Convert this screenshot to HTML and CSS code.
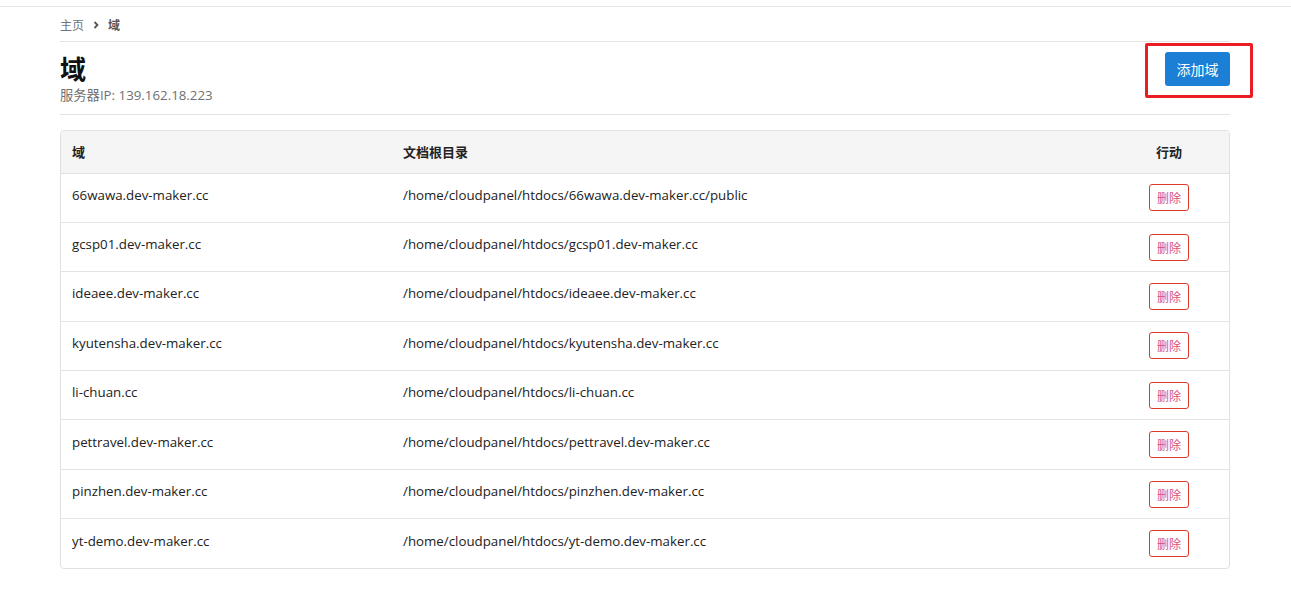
FILE: index.html
```html
<!DOCTYPE html>
<html lang="zh">
<head>
<meta charset="utf-8">
<link rel="stylesheet" href="styles.css">
</head>
<body>
<div class="topline"></div>
<main class="page">
  <nav class="crumbs">
    <a class="crumb-link">主页</a>
    <svg class="chev" width="8" height="8" viewBox="0 0 8 8"><path d="M2.5 1 L5.5 4 L2.5 7" fill="none" stroke="#555" stroke-width="1.8"/></svg>
    <span class="crumb-cur">域</span>
  </nav>
  <header class="head">
    <div class="head-text">
      <h1 class="title">域</h1>
      <div class="sub">服务器IP: 139.162.18.223</div>
    </div>
    <div class="highlight">
      <button class="btn-add">添加域</button>
    </div>
  </header>
  <div class="card">
    <table class="tbl">
      <thead>
        <tr><th class="c1">域</th><th class="c2">文档根目录</th><th class="c3">行动</th></tr>
      </thead>
      <tbody>
        <tr><td>66wawa.dev-maker.cc</td><td>/home/cloudpanel/htdocs/66wawa.dev-maker.cc/public</td><td class="act"><button class="btn-del">删除</button></td></tr>
        <tr><td>gcsp01.dev-maker.cc</td><td>/home/cloudpanel/htdocs/gcsp01.dev-maker.cc</td><td class="act"><button class="btn-del">删除</button></td></tr>
        <tr><td>ideaee.dev-maker.cc</td><td>/home/cloudpanel/htdocs/ideaee.dev-maker.cc</td><td class="act"><button class="btn-del">删除</button></td></tr>
        <tr><td>kyutensha.dev-maker.cc</td><td>/home/cloudpanel/htdocs/kyutensha.dev-maker.cc</td><td class="act"><button class="btn-del">删除</button></td></tr>
        <tr><td>li-chuan.cc</td><td>/home/cloudpanel/htdocs/li-chuan.cc</td><td class="act"><button class="btn-del">删除</button></td></tr>
        <tr><td>pettravel.dev-maker.cc</td><td>/home/cloudpanel/htdocs/pettravel.dev-maker.cc</td><td class="act"><button class="btn-del">删除</button></td></tr>
        <tr><td>pinzhen.dev-maker.cc</td><td>/home/cloudpanel/htdocs/pinzhen.dev-maker.cc</td><td class="act"><button class="btn-del">删除</button></td></tr>
        <tr><td>yt-demo.dev-maker.cc</td><td>/home/cloudpanel/htdocs/yt-demo.dev-maker.cc</td><td class="act"><button class="btn-del">删除</button></td></tr>
      </tbody>
    </table>
  </div>
</main>
</body>
</html>
```
FILE: styles.css
```css
* { box-sizing: border-box; }
html, body { margin: 0; padding: 0; background: #fff; }
body {
  font-family: "Open Sans", "Noto Sans CJK SC", sans-serif;
  font-size: 13.3px;
  color: #212529;
}
.topline { height: 7px; border-bottom: 1px solid #e6e6e6; }
.page { padding: 0 61px 0 60px; }
.crumbs {
  display: flex; align-items: center; gap: 8px;
  height: 35px; padding-top: 1px;
  border-bottom: 1px solid #e3e3e3;
  font-size: 12px;
}
.crumb-link { color: #6c757d; }
.crumb-cur { color: #555; font-weight: 700; }
.chev { margin-top: 1px; }
.head {
  display: flex; justify-content: space-between; align-items: flex-start;
  height: 73px;
  border-bottom: 1px solid #e3e3e3;
}
.title {
  margin: 10px 0 0; font-size: 26px; line-height: 32px; font-weight: 700; color: #111;
  font-family: "Noto Sans CJK SC", sans-serif;
}
.sub { color: #707070; font-size: 13.3px; line-height: 18px; margin-top: 2px; }
.highlight {
  margin: 1px -23px 0 0;
  width: 108px; height: 55px;
  border: 3px solid #ec1c24; border-radius: 2px;
  display: flex; align-items: flex-start; justify-content: flex-start;
  padding: 6px 0 0 17px;
}
.btn-add {
  width: 65px; height: 34px;
  background: #1a7fd5; color: #fff; border: none; border-radius: 3px;
  font-family: "Noto Sans CJK SC", sans-serif; font-size: 14px;
}
.card {
  margin-top: 15px;
  border: 1px solid #e0e0e0; border-radius: 4px; overflow: hidden;
}
.tbl { width: 100%; border-collapse: collapse; }
.tbl th {
  background: #f5f5f5; height: 42px; text-align: left;
  font-family: "Noto Sans CJK SC", sans-serif;
  font-size: 13px; font-weight: 700; color: #222;
  padding: 0 11px; border-bottom: 1px solid #e0e0e0;
}
.tbl th.c1 { width: 331px; }
.tbl th.c3 { text-align: center; width: 120px; padding: 0; }
.tbl td {
  height: 49.4px; padding: 0 11px 6px; color: #222;
  border-top: 1px solid #e3e3e3;
}
.tbl tbody tr:first-child td { border-top: none; }
.tbl td.act { text-align: center; padding: 0; }
.btn-del {
  width: 40px; height: 27px;
  background: #fff; border: 1px solid #dc3a2c; border-radius: 3px;
  color: #d7507a; font-size: 12px;
  font-family: "Noto Sans CJK SC", sans-serif;
  padding: 0;
}
```
